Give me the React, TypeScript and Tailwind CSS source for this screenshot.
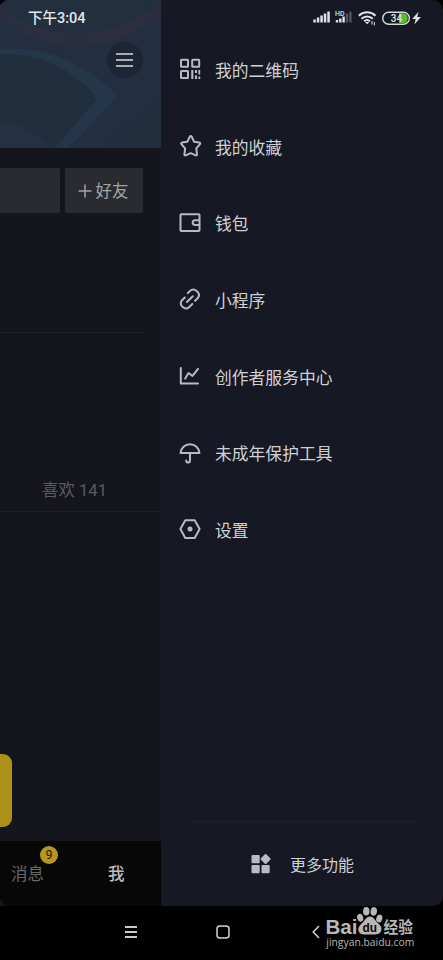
import React from 'react';
import { clsx } from 'clsx';

interface IconProps {
  children: React.ReactNode;
}

function MenuIcon({ children }: IconProps) {
  return (
    <svg
      viewBox="0 0 24 24"
      className="w-6 h-6 shrink-0"
      fill="none"
      stroke="#b9bac0"
      strokeWidth="2"
      strokeLinecap="round"
      strokeLinejoin="round"
    >
      {children}
    </svg>
  );
}

const menuItems = [
  {
    label: '我的二维码',
    icon: (
      <g strokeLinejoin="miter">
        <rect x="3" y="2.8" width="7" height="7" rx=".5" />
        <rect x="14.2" y="2.8" width="7" height="7" rx=".5" />
        <rect x="3" y="14" width="7" height="7" rx=".5" />
        <path
          d="M14.300 13v9M18 13v3M18 18.500v3.500"
          strokeWidth="2.100"
          strokeLinecap="butt"
        />
        <path d="M21.300 13v4.500M21.300 19.500v2.500" strokeWidth="1.800" strokeLinecap="butt" />
      </g>
    ),
  },
  {
    label: '我的收藏',
    icon: (
      <path d="M11.900 2.500c.4-.7 1.300-.7 1.700 0l2.500 5.200 5.300.9c.8.1 1.100 1 .6 1.600l-3.700 4.200.7 6c.1.800-.6 1.300-1.300 1l-5-2.200-5 2.200c-.7.300-1.400-.2-1.300-1l.7-6-3.700-4.200c-.5-.6-.2-1.500.6-1.600l5.300-.9z" />
    ),
  },
  {
    label: '钱包',
    icon: (
      <>
        <rect x="2.500" y="3.200" width="19" height="16.800" rx=".8" />
        <path d="M21.200 9.200h-4.100a2.400 2.400 0 0 0 0 4.800h4.100" />
      </>
    ),
  },
  {
    label: '小程序',
    icon: (
      <>
        <path d="m9.800 6.100 1.900-1.900c2-1.900 4.900-2 6.900-.3l1 1c1.800 2 1.700 4.700-.2 6.600l-2.300 2.200" />
        <path d="m6.800 10.500-2.500 2.500c-1.900 1.900-2 4.600-.2 6.400l.7.700c1.900 1.700 4.600 1.600 6.500-.2l3-2.900" />
        <path d="m8.900 15 5.900-5.800" />
      </>
    ),
  },
  {
    label: '创作者服务中心',
    icon: (
      <>
        <path d="M2.800 4v15.600H20" />
        <path d="m7.200 14.600 3.300-5.600 4 2.900 5.500-7" />
      </>
    ),
  },
  {
    label: '未成年保护工具',
    icon: (
      <>
        <path d="M2.500 11.900c.4-5 4.500-8.700 9.500-8.700s9.100 3.700 9.500 8.700z" />
        <path d="M12 12v7.400c0 2.700-3.600 2.800-3.800.2" />
      </>
    ),
  },
  {
    label: '设置',
    icon: (
      <>
        <path d="M7.300 3.200h9.400l4.900 8.900-4.900 8.900H7.300l-4.900-8.900z" />
        <circle cx="12" cy="12.100" r="2.500" fill="#b9bac0" stroke="none" />
      </>
    ),
  },
];

function StatusBar() {
  return (
    <div className="absolute left-0 top-0 w-full h-9 pl-[28px] pr-[19px] flex items-center justify-between text-[#e3e7ec]">
      <span className="mt-[3px] text-[14.500px] font-medium leading-none">下午3:04</span>
      <svg viewBox="0 0 112 20" className="w-[112px] h-5" fill="#dfe2e6">
        <path d="M1.300 11.500h2.500v3H1.300zM4.800 9.500h2.500v5H4.800zM8.300 7.500h2.500v7H8.300zM11.800 5.500h2.500v9h-2.500zM15.300 3.500h2.500v11h-2.500z" />
        <text x="23" y="7.500" fontSize="7" fontWeight="500" textLength="9.500" lengthAdjust="spacingAndGlyphs">HD</text>
        <path d="M23.800 12h2.400v2.500h-2.400zM27.100 10.500h2.400v4h-2.400zM30.400 8.500h2.400v6h-2.400z" />
        <path d="M33.800 5.500h2.400v9h-2.400zM37.200 3.500h2.400v11h-2.400z" fill="#50545d" />
        <g fill="none" stroke="#dfe2e6" strokeWidth="2">
          <path d="M46.800 7.700c4.700-4.500 12-4.500 16.700 0M49.500 10.700c3.200-3 8.100-3 11.300 0" />
          <path d="M52.200 13.300c1.700-1.500 4.100-1.500 5.800 0" />
        </g>
        <path d="m53 14 2.200 2.300 2.200-2.300zM59.500 13h1v3.500h-1zM61.800 14h1v3.500h-1z" />
        <path d="M87 5.200h4.400a5 5 0 0 1 0 9.900H87z" fill="#5fba2f" />
        <rect x="70.800" y="4.200" width="26.500" height="12" rx="5.800" fill="none" stroke="#d3d7d8" strokeWidth="1.400" />
        <text x="84.500" y="13.700" fontSize="10" fontWeight="500" textAnchor="middle">34</text>
        <path d="m106.500 3.700-6.300 7.400h3.500l-1.300 5.400 6.500-7.500h-3.700z" />
      </svg>
    </div>
  );
}

function ProfilePanel() {
  return (
    <div className="w-[161px] h-full flex flex-col bg-[#14151d] overflow-hidden">
      <div className="relative h-[148px] shrink-0">
        <svg viewBox="0 0 161 148" className="block w-full h-full">
          <rect width="161" height="148" fill="#232f41" />
          <path d="M0 0h158C124 44 40 46 0 8z" fill="#212f3e" />
          <path d="M0 5C38 43 116 43 161 0v11C119 58 40 58 0 15z" fill="#2b2d40" />
          <path d="M0 49c44-3 83 12 118 47l-50 52H0z" fill="#243649" />
          <path d="M0 54c40 0 72 13 97 45l-42 49H0z" fill="#212e3d" />
          <path d="M0 122c20 0 37 9 49 26H0z" fill="#233143" />
          <path d="M161 96 107 148h54z" fill="#212e3d" />
          <path d="M0 0h6L0 5z" fill="#05070a" />
        </svg>
        <button
          type="button"
          className="absolute left-[107px] top-[42px] w-9 h-9 pr-[1px] pb-[1px] rounded-full bg-[#1d2534] flex flex-col items-center justify-center gap-[4px]"
          aria-label="菜单"
        >
          <span className="w-[17px] h-[2px] bg-[#a9acb1]" />
          <span className="w-[17px] h-[2px] bg-[#a9acb1]" />
          <span className="w-[17px] h-[2px] bg-[#a9acb1]" />
        </button>
      </div>

      <div className="h-[185px] shrink-0 pt-5 mr-[17px] flex items-start gap-[5px] border-b border-[#1e1f26]">
        <div className="w-[60px] h-[45px] rounded-r-[2px] bg-[#2a2b30]" />
        <button
          type="button"
          className="w-[78px] h-[45px] pr-[2px] rounded-[2px] bg-[#2a2b30] flex items-center justify-center gap-[4px] text-[16.500px] text-[#a2a3a5]"
        >
          <svg viewBox="0 0 14 14" className="w-[14px] h-[14px]" stroke="currentColor" strokeWidth="1.500">
            <path d="M7 .5v13M.5 7h13" />
          </svg>
          <span className="mt-[3px] leading-none">好友</span>
        </button>
      </div>

      <div className="h-[179px] shrink-0 flex items-end pl-[42px] pb-[11px] border-b border-[#1e1f26]">
        <span className="text-[16.500px] leading-[18px] text-[#5a5b61]">喜欢 141</span>
      </div>

      <div className="flex-1 pt-[242px]">
        <div className="w-[12px] h-[73px] rounded-r-[9px] bg-[#ae9118]" />
      </div>

      <div className="h-[65px] pt-[4px] shrink-0 bg-[#070707] rounded-bl-[10px] flex items-center text-[16.500px] leading-none">
        <div className="relative ml-[11px] w-[34px] text-[#68696b]">
          消息
          <span className="absolute left-[29px] -top-[21px] w-[18px] h-[18px] rounded-full bg-[#b6961b] text-[12.500px] text-[#1b180b] flex items-center justify-center">
            9
          </span>
        </div>
        <div className="ml-[63px] font-medium text-[#bdbdbd]">我</div>
      </div>
    </div>
  );
}

function SideDrawer() {
  return (
    <div className="flex-1 h-full flex flex-col bg-[#161923] rounded-tr-[10px] rounded-br-[10px]">
      <nav className="pt-[31px]">
        {menuItems.map((item) => (
          <a key={item.label} className="h-[76.700px] pl-[17px] flex items-center gap-[13px]">
            <MenuIcon>{item.icon}</MenuIcon>
            <span className="mt-[4px] text-[16.800px] leading-none text-[#cfd0d4]">{item.label}</span>
          </a>
        ))}
      </nav>
      <div className="mt-auto mx-[27px] h-[85px] border-t border-[#1d2029] flex items-center pl-[63px] gap-[19px]">
        <svg viewBox="0 0 20 20" className="w-5 h-5" fill="#b9bac4">
          <rect x="0.500" y="1" width="8.200" height="8.200" rx="1" />
          <rect x="0.500" y="11" width="8.200" height="8.200" rx="1" />
          <rect x="10.500" y="11" width="8.200" height="8.200" rx="1" />
          <rect x="10.800" y="1.200" width="7.600" height="7.600" rx="1" transform="rotate(45 14.600 5)" />
        </svg>
        <span className="mt-[3px] text-[16px] leading-none text-[#cfd0d4]">更多功能</span>
      </div>
    </div>
  );
}

function Watermark() {
  return (
    <svg
      viewBox="0 0 95 46"
      className="absolute left-[324px] top-[904px] w-[95px] h-[46px] font-['Open_Sans','Noto_Sans_CJK_SC',sans-serif]"
      fill="#b7b7b7"
    >
      <text x="1.500" y="30" fontSize="20" fontWeight="700" textLength="32" lengthAdjust="spacingAndGlyphs" className="font-['Liberation_Sans']">
        Bai
      </text>
      <ellipse cx="36.200" cy="13.700" rx="3" ry="4" transform="rotate(-18 36.200 13.700)" />
      <ellipse cx="42.300" cy="7.200" rx="3.200" ry="4.300" />
      <ellipse cx="49.800" cy="7.400" rx="3.200" ry="4.300" transform="rotate(8 49.800 7.400)" />
      <ellipse cx="55.300" cy="14.500" rx="3" ry="4" transform="rotate(18 55.300 14.500)" />
      <path d="M46 12.500c3.200 0 4.800 3.500 7.200 6 3.200 3 5.300 5 3.800 8.700-1.500 3.600-5.800 3.300-11 3.300s-10 .7-11.300-3.300c-1-3.700 1.100-5.700 4-8.700 2.400-2.500 4.100-6 7.300-6z" />
      <text x="38.500" y="28" fontSize="12" fontWeight="700" fill="#080808" textLength="14.500" lengthAdjust="spacingAndGlyphs" className="font-['Liberation_Sans']">
        du
      </text>
      <text x="59.500" y="29" fontSize="15.500" fontWeight="700" textLength="29.500" lengthAdjust="spacingAndGlyphs">经验</text>
      <text x="2.300" y="42" fontSize="11" fontWeight="500" textLength="88" lengthAdjust="spacingAndGlyphs">
        jingyan.baidu.com
      </text>
    </svg>
  );
}

function NavigationBar() {
  const line = 'w-[12px] h-[2px] bg-[#cccccc]';
  return (
    <div className="h-[54px] bg-black flex items-center pl-[125px]">
      <div className="flex flex-col gap-[3px] pb-[3px]">
        <span className={line} />
        <span className={line} />
        <span className={line} />
      </div>
      <svg viewBox="0 0 14 14" className="ml-[79px] mb-[2px] w-[14px] h-[14px]" fill="none" stroke="#d2d2d2" strokeWidth="1.500">
        <rect x="1" y="1" width="12" height="12" rx="3" />
      </svg>
      <svg viewBox="0 0 8 14" className="ml-[82px] mb-[2px] w-2 h-[14px]" fill="none" stroke="#d2d2d2" strokeWidth="1.500">
        <path d="M7 1 1.200 7 7 13" />
      </svg>
    </div>
  );
}

export default function App() {
  return (
    <div
      className={clsx(
        'relative w-[443px] h-[960px] bg-black overflow-hidden',
        "font-[Roboto,'Noto_Sans_CJK_SC',sans-serif]"
      )}
    >
      <div className="h-[906px] flex">
        <ProfilePanel />
        <SideDrawer />
      </div>
      <NavigationBar />
      <StatusBar />
      <Watermark />
    </div>
  );
}
